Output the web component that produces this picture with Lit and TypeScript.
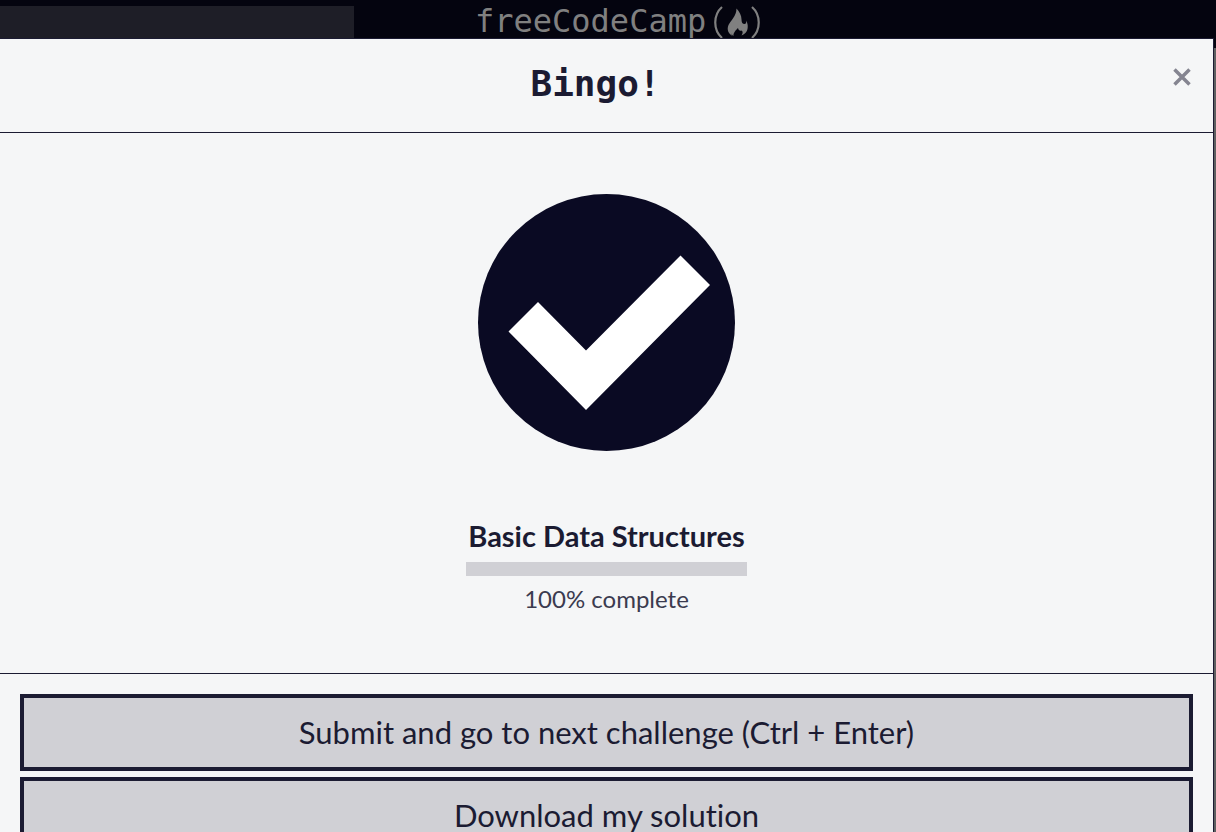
import { LitElement, html, css } from "lit";
import { customElement } from "lit/decorators.js";

@customElement("app-root")
export class AppRoot extends LitElement {
  static styles = css`
    :host {
      display: block;
      position: relative;
      height: 100vh;
      overflow: hidden;
      background: #5d5f60;
      color: #1b1b32;
      font-family: "Lato", sans-serif;
      font-variant-ligatures: none;
    }
    * {
      box-sizing: border-box;
    }
    .nav {
      display: grid;
      grid-template-columns: 354px 1fr;
      column-gap: 121px;
      height: 48px;
      padding-top: 6px;
      background: #04040f;
    }
    .search {
      height: 36px;
      border: 0;
      border-radius: 0;
      background: #1e1e27;
    }
    .logo {
      display: flex;
      align-items: flex-start;
      color: #808080;
      font: 32px/30px "DejaVu Sans Mono", monospace;
      text-decoration: none;
    }
    .mark {
      width: 58px;
      height: 36px;
    }
    .dialog {
      position: absolute;
      inset: 38px 2px auto -1px;
      border: 1px solid #1b1b32;
      background: #f5f6f7;
    }
    .header {
      display: flex;
      align-items: flex-start;
      padding: 20px;
      border-bottom: 1px solid #1b1b32;
    }
    .title {
      flex: 1;
      margin: 0;
      padding-bottom: 3px;
      font: bold 36px/50px "DejaVu Sans Mono", monospace;
      text-align: center;
    }
    .close {
      display: flex;
      justify-content: center;
      align-items: center;
      width: 22px;
      height: 36px;
      padding: 0;
      border: 0;
      background: none;
      color: #858591;
    }
    .body {
      display: flex;
      flex-direction: column;
      align-items: center;
      padding: 60px 20px;
      border-bottom: 1px solid #1b1b32;
    }
    .check {
      display: block;
      width: 258px;
      height: 259px;
    }
    .progress {
      display: flex;
      flex-direction: column;
      min-width: 281px;
      margin-top: 64px;
      text-align: center;
    }
    .block {
      margin: 0;
      font-size: 29px;
      line-height: 40px;
      font-weight: bold;
    }
    .bar {
      height: 14px;
      margin-top: 6px;
      background: #d0d0d5;
    }
    .percent {
      margin: 8px 0 0;
      color: #3b3b4f;
      font-size: 24px;
      line-height: 29px;
    }
    .footer {
      display: flex;
      flex-direction: column;
      gap: 6px;
      padding: 20px;
    }
    .action {
      width: 100%;
      padding: 12px;
      border: 4px solid #1b1b32;
      border-radius: 0;
      background: #d0d0d5;
      color: #1b1b32;
      font: 31px/45px "Lato", sans-serif;
      font-variant-ligatures: none;
    }
  `;

  render() {
    return html`
      <header class="nav">
        <input class="search" type="search" aria-label="Search" />
        <a class="logo" href="#">
          <span>freeCodeCamp</span>
          <svg class="mark" viewBox="0 0 58 36" aria-hidden="true">
            <path d="M16 1C7 9 7 24 16 32M46 1C55 9 55 24 46 32" fill="none" stroke="currentColor" stroke-width="2.2" />
            <path d="M30.500 2.500c3 3 5 7 5 11 0 3 1 4.500 3 4.500 1.500 0 2-1.500 1.500-3.500 2 3 2 6 1.500 8.500-.5 3-2.500 5-6 6.500 1.500-2.500 1.500-4 0-5-1.500.5-3 0-3.500-2.500-2 2-5 5-4.500 8-1.500-1-2-2-1.500-3-.5 1-.5 2 .5 3-4-2.500-6-6-4-11 2-4 8-9 8-16.500z" fill="currentColor" />
          </svg>
        </a>
      </header>
      <section class="dialog" role="dialog" aria-modal="true" aria-labelledby="title">
        <div class="header">
          <h1 class="title" id="title">Bingo!</h1>
          <button class="close" type="button" aria-label="Close">
            <svg width="18" height="18" viewBox="0 0 18 18">
              <path d="M1.5 1.5l15 15M16.5 1.5l-15 15" stroke="currentColor" stroke-width="3.5" />
            </svg>
          </button>
        </div>
        <div class="body">
          <svg class="check" viewBox="0 0 258 259" role="img" aria-label="Passed">
            <circle cx="128.5" cy="129.5" r="128.5" fill="#0a0a23" />
            <path d="M30.500 138.500L60 109 108 157.500 202.500 62.500 232 92 108 217z" fill="#fff" />
          </svg>
          <div class="progress">
            <h2 class="block">Basic Data Structures</h2>
            <div class="bar" role="progressbar" aria-label="Progress" aria-valuenow="100"></div>
            <p class="percent">100% complete</p>
          </div>
        </div>
        <div class="footer">
          <button class="action" type="button">Submit and go to next challenge (Ctrl + Enter)</button>
          <button class="action" type="button">Download my solution</button>
        </div>
      </section>
    `;
  }
}
